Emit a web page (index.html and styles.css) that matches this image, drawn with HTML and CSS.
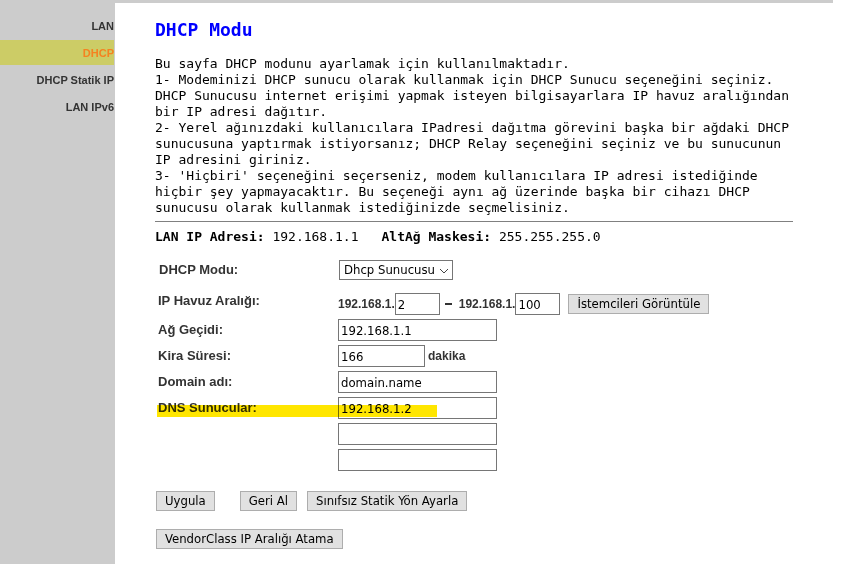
FILE: index.html
```html
<!DOCTYPE html>
<html lang="tr">
<head>
<meta charset="utf-8">
<title>DHCP Modu</title>
<link rel="stylesheet" href="styles.css">
</head>
<body>
<div class="page">
  <nav class="sidebar">
    <a href="#lan">LAN</a>
    <a href="#dhcp" class="active">DHCP</a>
    <a href="#statik">DHCP Statik IP</a>
    <a href="#ipv6">LAN IPv6</a>
  </nav>
  <main class="content">
    <h1>DHCP Modu</h1>
    <p class="intro">Bu sayfa DHCP modunu ayarlamak için kullanılmaktadır.<br>
      1- Modeminizi DHCP sunucu olarak kullanmak için DHCP Sunucu seçeneğini seçiniz.<br>
      DHCP Sunucusu internet erişimi yapmak isteyen bilgisayarlara IP havuz aralığından<br>
      bir IP adresi dağıtır.<br>
      2- Yerel ağınızdaki kullanıcılara IPadresi dağıtma görevini başka bir ağdaki DHCP<br>
      sunucusuna yaptırmak istiyorsanız; DHCP Relay seçeneğini seçiniz ve bu sunucunun<br>
      IP adresini giriniz.<br>
      3- 'Hiçbiri' seçeneğini seçerseniz, modem kullanıcılara IP adresi istediğinde<br>
      hiçbir şey yapmayacaktır. Bu seçeneği aynı ağ üzerinde başka bir cihazı DHCP<br>
      sunucusu olarak kullanmak istediğinizde seçmelisiniz.</p>
    <hr>
    <p class="address"><span><b>LAN IP Adresi:</b> 192.168.1.1</span><span><b>AltAğ Maskesi:</b> 255.255.255.0</span></p>
    <form>
      <div class="row mode">
        <label for="mode">DHCP Modu:</label>
        <div class="select"><select id="mode"><option>Dhcp Sunucusu</option></select><svg viewBox="0 0 10 6" aria-hidden="true"><path d="M1 1l4 4 4-4"/></svg></div>
      </div>
      <div class="row range">
        <label for="start" class="top">IP Havuz Aralığı:</label>
        <div class="field">
          <span>192.168.1.</span><input id="start" class="short" value="2">
          <span class="dash"></span>
          <label for="end">192.168.1.</label><input id="end" class="short" value="100">
          <button type="button" class="clients">İstemcileri Görüntüle</button>
        </div>
      </div>
      <div class="row">
        <label for="gateway">Ağ Geçidi:</label>
        <div class="field"><input id="gateway" value="192.168.1.1"></div>
      </div>
      <div class="row">
        <label for="lease">Kira Süresi:</label>
        <div class="field"><input id="lease" class="medium" value="166"><span class="unit">dakika</span></div>
      </div>
      <div class="row">
        <label for="domain">Domain adı:</label>
        <div class="field"><input id="domain" value="domain.name"></div>
      </div>
      <div class="row marked">
        <label for="dns1">DNS Sunucular:</label>
        <div class="field"><input id="dns1" value="192.168.1.2"></div>
      </div>
      <div class="row"><span></span><div class="field"><input aria-label="DNS 2"></div></div>
      <div class="row"><span></span><div class="field"><input aria-label="DNS 3"></div></div>
      <div class="actions">
        <button type="submit" class="apply">Uygula</button>
        <button type="reset">Geri Al</button>
        <button type="button">Sınıfsız Statik Yön Ayarla</button>
      </div>
      <div class="actions">
        <button type="button">VendorClass IP Aralığı Atama</button>
      </div>
    </form>
  </main>
</div>
</body>
</html>
```
FILE: styles.css
```css
* { box-sizing: border-box; }

body {
  margin: 0;
  background: #fff;
  color: #000;
  font: 13px/16px "DejaVu Sans Mono", monospace;
}

.page {
  display: flex;
  min-height: 100vh;
  margin-right: 12px;
}

.sidebar {
  flex: none;
  width: 115px;
  padding: 13px 1px 0 0;
  background: #ccc;
  display: flex;
  flex-direction: column;
  gap: 2px;
}

.sidebar a {
  padding-top: 2px;
  font: bold 11px/23px "Liberation Sans", Arial, sans-serif;
  color: #333;
  text-align: right;
  text-decoration: none;
  white-space: nowrap;
}

.sidebar .active { background: #cc6; color: #f58220; }

.content {
  flex: 1;
  min-width: 0;
  padding: 15px 40px 0;
  border-top: 3px solid #ccc;
}

h1 {
  margin: 0 0 14px;
  font-size: 18px;
  line-height: 24px;
  color: #00f;
}

p { margin: 0; white-space: nowrap; }

hr {
  margin: 5px 0 7px;
  border: 0;
  border-top: 1px solid #808080;
}

.address { display: flex; gap: 23px; }

form {
  margin-top: 12px;
  font: bold 13px/20px "Liberation Sans", Arial, sans-serif;
  color: #333;
}

.row {
  position: relative;
  display: grid;
  grid-template-columns: 180px 1fr;
  align-items: center;
  height: 26px;
  padding-left: 3px;
  white-space: nowrap;
}

.row.mode { margin-bottom: 8px; padding-left: 4px; }
.top { align-self: start; }

.field { display: flex; align-items: center; font-size: 12px; }

input, select, button {
  font: 13px/18px "DejaVu Sans Condensed", "DejaVu Sans", sans-serif;
  color: #000;
  border-radius: 0;
  margin: 0;
}

input {
  width: 159px;
  height: 22px;
  padding: 0 2px;
  border: 1px solid #767676;
  background: #fff;
}

input.short { width: 45px; }
input.medium { width: 87px; }
.unit { margin-left: 3px; }
.dash { width: 7px; height: 2px; margin: 0 7px 0 5px; background: #333; }

button {
  height: 20px;
  padding: 0 8px;
  border: 1px solid #adadad;
  background: #e1e1e1;
}

.clients { margin-left: 8px; }

.select { position: relative; width: 114px; }

select {
  appearance: none;
  width: 100%;
  height: 20px;
  padding: 0 4px;
  border: 1px solid #767676;
  background: #fff;
  display: block;
}

.select svg {
  position: absolute;
  right: 4px;
  top: 8px;
  width: 10px;
  height: 6px;
  fill: none;
  stroke: #444;
  pointer-events: none;
}

/* Highlighter stroke across the DNS row */
.marked::after {
  content: "";
  position: absolute;
  left: 2px;
  top: 10px;
  width: 280px;
  height: 12px;
  background: #ffe600;
  mix-blend-mode: multiply;
  pointer-events: none;
}

.actions {
  display: flex;
  gap: 10px;
  margin-top: 18px;
  padding-left: 1px;
}

.apply { margin-right: 15px; }
```
